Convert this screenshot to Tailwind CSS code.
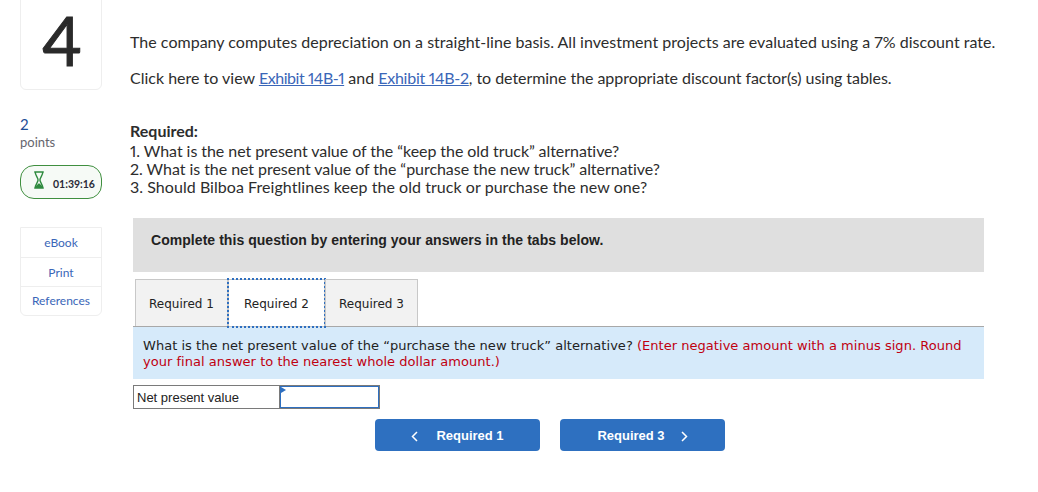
<!DOCTYPE html>
<html lang="en">
<head>
    <meta charset="UTF-8">
    <title>Question 4</title>
    <script src="https://cdn.jsdelivr.net/npm/@tailwindcss/browser@4"></script>
</head>
<body class="bg-white overflow-hidden font-['Lato','Open_Sans',sans-serif] text-[#2d2d2d]">
    <div class="flex w-[1038px] h-[492px]">
        <!-- Left rail -->
        <div class="w-[130px] shrink-0 pl-5">
            <div class="w-[82px] h-[91px] -mt-px pb-[10px] pl-[2px] border border-[#eeeeee] rounded-b-md flex items-center justify-center text-[68px] leading-none text-[#2a2a2a] [-webkit-text-stroke:1px_#2a2a2a]">4</div>
            <div class="mt-[27px] text-[15px] leading-[15px] text-[#1f4e96]">2</div>
            <div class="mt-[2px] text-[13px] leading-[16px] text-[#66666e]">points</div>
            <div class="mt-[15px] w-[82px] h-[34px] border border-[#3f8f3f] rounded-[14px] bg-[#f6faf6] flex items-center pl-[12px] gap-[8px]">
                <svg width="12" height="18" viewBox="0 0 12 19" class="-mt-1">
                    <path d="M1.500 1h9M1.500 18h9M2 1c0 4 3 6 3 8.500s-3 4.500-3 8.500M10 1c0 4-3 6-3 8.500s3 4.500 3 8.500" fill="none" stroke="#2f8a3f" stroke-width="1.500" stroke-linecap="round"/>
                    <path d="M2 18c0-2.500 4-5 4-5s4 2.500 4 5z" fill="#2f8a3f"/>
                </svg>
                <span class="mt-[6px] text-[10.500px] font-bold text-[#2a2a38]">01:39:16</span>
            </div>
            <div class="mt-[28px] w-[82px] border border-[#eeeeee] rounded-b-md text-[12px] text-[#3a66b8] text-center">
                <div class="h-[30px] leading-[30px] border-b border-[#eeeeee]">eBook</div>
                <div class="h-[29px] leading-[29px] border-b border-[#eeeeee]">Print</div>
                <div class="h-[28px] leading-[28px]">References</div>
            </div>
        </div>

        <!-- Question -->
        <div class="flex-1 proportional-nums">
            <p class="mt-[33px] text-[16px] leading-[18px] tracking-[0.02px]">The company computes depreciation on a straight-line basis. All investment projects are evaluated using a 7% discount rate.</p>
            <p class="mt-[18px] text-[16px] leading-[18px]">Click here to view <a class="text-[#3a66b8] underline tracking-[-0.45px]">Exhibit 14B-1</a> and <a class="text-[#3a66b8] underline tracking-[-0.25px]">Exhibit 14B-2</a><span class="tracking-[-0.05px]">, to determine the appropriate discount factor(s) using tables.</span></p>
            <div class="mt-[35px] text-[16px] leading-[18px]">
                <div class="font-bold mb-[2px]">Required:</div>
                <div class="tracking-[-0.06px]">1. What is the net present value of the “keep the old truck” alternative?</div>
                <div class="tracking-[-0.05px]">2. What is the net present value of the “purchase the new truck” alternative?</div>
                <div class="tracking-[0.05px]">3. Should Bilboa Freightlines keep the old truck or purchase the new one?</div>
            </div>

            <div class="ml-[3px] w-[851px]">
                <div class="mt-[22px] h-[54px] bg-[#dfdfdf] pl-[18px] pt-[13px] font-['Liberation_Sans',sans-serif] text-[14px] leading-[18px] tracking-[0.05px] font-bold text-[#222222]">Complete this question by entering your answers in the tabs below.</div>

                <!-- Tabs -->
                <div class="mt-[7px] h-[48px] flex pl-[2px] border-b border-[#a8a8a8] font-['DejaVu_Sans',sans-serif] text-[12px] text-[#222222]">
                    <div class="w-[93px] h-[47px] pt-[2px] bg-[#f2f2f2] border border-[#c8c8c8] border-b-0 flex items-center justify-center">Required 1</div>
                    <div class="w-[97px] h-[48px] pt-[2px] bg-white border border-[#c8c8c8] outline-2 outline-dotted -outline-offset-1 outline-[#2e6fc0] flex items-center justify-center">Required 2</div>
                    <div class="w-[93px] h-[47px] pt-[2px] bg-[#f2f2f2] border border-[#c8c8c8] border-b-0 flex items-center justify-center">Required 3</div>
                </div>
                <div class="h-[52px] bg-[#d6eafa] pl-[10px] pt-[11px] font-['DejaVu_Sans',sans-serif] text-[13px] leading-[16px] tracking-[0.03px] text-[#222222]">
                    What is the net present value of the “purchase the new truck” alternative? <span class="text-[#c00010]">(Enter negative amount with a minus sign. Round your final answer to the nearest whole dollar amount.)</span>
                </div>

                <!-- Answer row -->
                <div class="mt-[6px] flex w-[247px] h-[24px] border border-[#7a7a7a] font-['Liberation_Sans',sans-serif] text-[13px] text-[#222222]">
                    <div class="w-[146px] pl-[3px] pt-px leading-[22px] border-r border-[#7a7a7a]">Net present value</div>
                    <div class="relative flex-1 border border-[#2e6fc0]">
                        <span class="absolute top-0 left-0 w-0 h-0 border-y-[3px] border-y-transparent border-l-[5px] border-l-[#2e6fc0]"></span>
                    </div>
                </div>

                <!-- Prev / next -->
                <div class="mt-[10px] flex gap-5 pl-[242px] font-['Liberation_Sans',sans-serif] text-[13px] font-bold text-white">
                    <button class="w-[165px] h-[32px] pt-[2px] rounded-sm bg-[#2e70c0] flex items-center justify-center gap-[18px]">
                        <svg width="7" height="11" viewBox="0 0 7 11"><path d="M6 1 1.500 5.500 6 10" fill="none" stroke="white" stroke-width="1.500"/></svg>
                        Required 1
                    </button>
                    <button class="w-[165px] h-[32px] pt-[2px] rounded-sm bg-[#2e70c0] flex items-center justify-center gap-[16px]">
                        Required 3
                        <svg width="7" height="11" viewBox="0 0 7 11"><path d="M1 1l4.500 4.500L1 10" fill="none" stroke="white" stroke-width="1.500"/></svg>
                    </button>
                </div>
            </div>
        </div>
    </div>
</body>
</html>
